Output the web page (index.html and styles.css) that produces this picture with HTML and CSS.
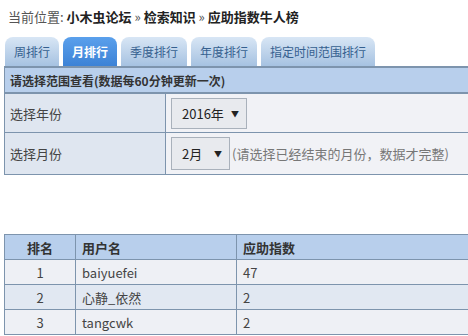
FILE: index.html
```html
<!DOCTYPE html>
<html lang="zh-CN">
<head>
    <meta charset="UTF-8">
    <title>应助指数牛人榜</title>
    <link rel="stylesheet" href="styles.css">
</head>
<body>
    <div class="crumb">
        <span class="crumb-label">当前位置:</span>
        <a href="#">小木虫论坛</a> » <a href="#">检索知识</a> » <a href="#">应助指数牛人榜</a>
    </div>

    <ul class="tabs">
        <li class="tab">周排行</li>
        <li class="tab active">月排行</li>
        <li class="tab">季度排行</li>
        <li class="tab">年度排行</li>
        <li class="tab">指定时间范围排行</li>
    </ul>

    <table class="panel">
        <tr>
            <th colspan="2">请选择范围查看(数据每60分钟更新一次)</th>
        </tr>
        <tr class="row-year">
            <td class="label">选择年份</td>
            <td class="field">
                <span class="select select-year">2016年<i>▼</i></span>
            </td>
        </tr>
        <tr class="row-month">
            <td class="label">选择月份</td>
            <td class="field">
                <span class="select select-month">2月<i>▼</i></span><span class="hint">(请选择已经结束的月份，数据才完整)</span>
            </td>
        </tr>
    </table>

    <table class="ranks">
        <thead>
            <tr>
                <th class="col-rank">排名</th>
                <th class="col-user">用户名</th>
                <th>应助指数</th>
            </tr>
        </thead>
        <tbody>
            <tr>
                <td class="col-rank">1</td>
                <td>baiyuefei</td>
                <td>47</td>
            </tr>
            <tr>
                <td class="col-rank">2</td>
                <td>心静_依然</td>
                <td>2</td>
            </tr>
            <tr>
                <td class="col-rank">3</td>
                <td>tangcwk</td>
                <td>2</td>
            </tr>
        </tbody>
    </table>
</body>
</html>
```

FILE: styles.css
```css
html {
    overflow: hidden;
}
body {
    margin: 0;
    font-family: "Noto Sans CJK SC", "Liberation Sans", sans-serif;
    font-size: 12px;
    color: #333;
    background-color: #fff;
}
.crumb {
    padding: 7px 8px 0;
    height: 24px;
    font-size: 13px;
    color: #555;
}
.crumb a {
    color: #222;
    font-weight: bold;
    text-decoration: none;
}
.tabs {
    list-style: none;
    margin: 6px 0 0 5px;
    padding: 0;
    display: flex;
    gap: 4px;
}
.tab {
    height: 29px;
    line-height: 29px;
    padding: 0 9px;
    border-radius: 8px 8px 0 0;
    background: linear-gradient(#d8e6f5, #a6c2e1);
    color: #35608f;
    font-size: 12px;
}
.tab.active {
    padding: 0 9px;
    background: linear-gradient(#5aa0ec, #3c82d6);
    color: #fff;
    font-weight: bold;
}
.panel {
    margin-left: 4px;
    width: 520px;
    border-collapse: collapse;
    border: 1px solid #7d94ad;
}
.panel th {
    height: 24px;
    padding: 0 5px;
    text-align: left;
    font-size: 12px;
    color: #333;
    background-color: #b8cfec;
    border-top: 2px solid #7d94ad;
    border-bottom: 2px solid #7d94ad;
}
.panel td {
    border-bottom: 1px solid #7d94ad;
    padding: 0 5px;
}
.panel .label {
    width: 150px;
    background-color: #dfe6f0;
    border-right: 1px solid #7d94ad;
    color: #444;
    font-size: 13px;
}
.panel .field {
    background-color: #f1f2f6;
}
.row-year td {
    height: 38px;
}
.row-month td {
    height: 41px;
}
.select {
    display: inline-flex;
    align-items: center;
    justify-content: space-between;
    box-sizing: border-box;
    height: 31px;
    padding: 0 7px 0 10px;
    border: 1px solid #a9b1bb;
    background-color: #e8eaee;
    font-size: 13px;
    color: #222;
    vertical-align: middle;
}
.select i {
    font-style: normal;
    font-size: 8px;
}
.select-year {
    width: 76px;
}
.select-month {
    width: 59px;
    height: 33px;
}
.hint {
    margin-left: 2px;
    color: #777;
    font-size: 13px;
    vertical-align: middle;
}
.ranks {
    margin: 59px 0 0 4px;
    width: 520px;
    border-collapse: collapse;
    border: 1px solid #7d94ad;
}
.ranks th, .ranks td {
    height: 24px;
    padding: 0 6px;
    text-align: left;
    border: 1px solid #7d94ad;
    font-size: 13px;
}
.ranks th {
    background-color: #b8cfec;
    color: #333;
}
.ranks td {
    color: #444;
}
.ranks tbody tr:nth-child(odd) td {
    background-color: #eef0f5;
}
.ranks tbody tr:nth-child(even) td {
    background-color: #e1e8f2;
}
.ranks .col-rank {
    width: 58px;
    text-align: center;
}
.ranks .col-user {
    width: 148px;
}
```
